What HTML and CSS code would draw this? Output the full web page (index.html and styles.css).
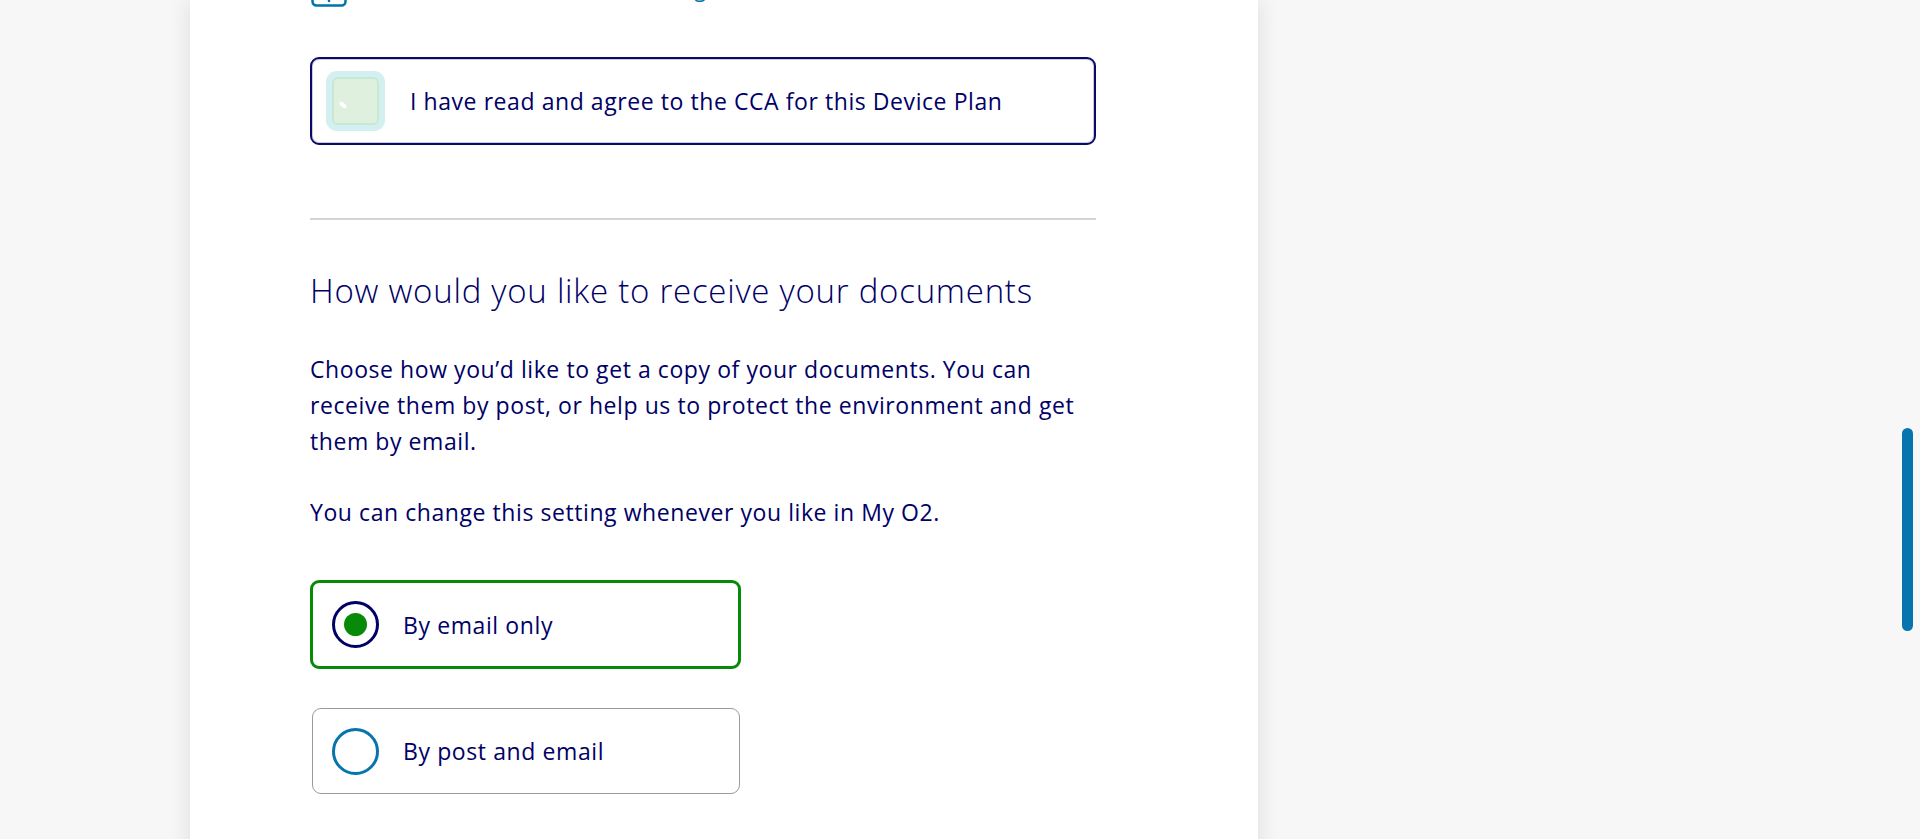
FILE: index.html
```html
<!DOCTYPE html>
<html lang="en">
<head>
<meta charset="utf-8">
<title>Device Plan – Documents</title>
<link rel="stylesheet" href="styles.css">
</head>
<body>
<div class="page">
  <main class="card">
    <div class="content">
      <div class="doc-link">
        <svg class="doc-icon" width="36" height="36" viewBox="0 0 36 36" aria-hidden="true">
          <rect x="1.5" y="1.5" width="33" height="33" rx="4" fill="none" stroke="#0073ae" stroke-width="2.5"/>
          <path d="M18 24 L18 30" stroke="#0073ae" stroke-width="2.5" stroke-linecap="round"/>
        </svg>
        <span class="doc-text">Download the Consumer Credit Agreement</span>
      </div>

      <label class="agree-box">
        <span class="checkbox"><span class="checkbox-inner"><span class="tick"></span></span></span>
        <span class="agree-text">I have read and agree to the CCA for this Device Plan</span>
      </label>

      <hr class="divider">

      <h2 class="heading">How would you like to receive your documents</h2>

      <p class="para">Choose how you’d like to get a copy of your documents. You can receive them by post, or help us to protect the environment and get them by email.</p>
      <p class="para para-gap">You can change this setting whenever you like in My O2.</p>

      <div class="options">
        <label class="option option-selected">
          <span class="radio radio-on"><span class="dot"></span></span>
          <span class="option-text">By email only</span>
        </label>
        <label class="option option-plain">
          <span class="radio radio-off"></span>
          <span class="option-text">By post and email</span>
        </label>
      </div>
    </div>
  </main>
</div>
<div class="scroll-thumb"></div>
</body>
</html>
```

FILE: styles.css
```css
html, body {
  margin: 0;
  padding: 0;
}
body {
  background: #f7f7f7;
  font-family: "Open Sans", "Noto Sans", sans-serif;
  color: #000066;
  height: 839px;
  overflow: hidden;
}
.page {
  display: flex;
  padding-left: 190px;
}
.card {
  width: 1068px;
  min-height: 900px;
  background: #ffffff;
  box-shadow: 0 0 22px rgba(0, 0, 0, 0.11);
  box-sizing: border-box;
  padding: 0 162px 0 120px;
}
.content {
  width: 786px;
}
.doc-link {
  display: flex;
  align-items: flex-end;
  gap: 12px;
  height: 37px;
  margin-top: -30px;
  color: #0073ae;
  font-size: 21.5px;
  line-height: 28px;
}
.doc-icon {
  flex: none;
  margin-left: 1px;
}
.doc-text {
  margin-bottom: 4px;
}
.agree-box {
  display: flex;
  align-items: center;
  box-sizing: border-box;
  height: 88px;
  margin-top: 50px;
  padding-left: 14px;
  border: 2px solid #0a0a6a;
  border-radius: 9px;
  box-shadow: inset 0 0 0 1px rgba(110, 110, 140, 0.35);
}
.checkbox {
  flex: none;
  width: 59px;
  height: 60px;
  border-radius: 11px;
  background: #d3eff0;
  display: flex;
  align-items: center;
  justify-content: center;
  margin-right: 25px;
}
.checkbox-inner {
  position: relative;
  width: 43px;
  height: 44px;
  border: 2px solid #c9e8d4;
  border-radius: 6px;
  background: #dff0de;
}
.tick {
  position: absolute;
  left: 5px;
  top: 24px;
  width: 8px;
  height: 4px;
  border-radius: 2px;
  background: #ffffff;
  transform: rotate(40deg);
}
.agree-text {
  font-size: 23px;
  line-height: 30px;
  letter-spacing: 0.57px;
}
.divider {
  margin: 73px 0 0;
  border: 0;
  height: 2px;
  background: #d4d4d4;
}
.heading {
  margin: 51px 0 0;
  font-size: 33px;
  font-weight: 300;
  line-height: 40px;
  letter-spacing: 0.75px;
}
.para {
  margin: 40px 0 0;
  font-size: 23px;
  line-height: 36px;
  letter-spacing: 0.57px;
}
.para.para-gap {
  margin-top: 35px;
}
.options {
  display: flex;
  flex-direction: column;
  align-items: flex-start;
  margin-top: 50px;
}
.option {
  display: flex;
  align-items: center;
  box-sizing: border-box;
  border-radius: 9px;
}
.option-selected {
  width: 431px;
  height: 89px;
  border: 3px solid #078a08;
  padding-left: 19px;
}
.option-plain {
  width: 428px;
  height: 86px;
  margin: 39px 0 0 2px;
  border: 1px solid #9a9a9a;
  padding-left: 19px;
}
.radio {
  flex: none;
  box-sizing: border-box;
  width: 47px;
  height: 47px;
  border-radius: 50%;
  display: flex;
  align-items: center;
  justify-content: center;
  margin-right: 24px;
}
.radio-on {
  border: 3px solid #000066;
}
.radio-off {
  border: 3px solid #0874ae;
}
.dot {
  width: 23px;
  height: 23px;
  border-radius: 50%;
  background: #078a08;
}
.option-text {
  font-size: 23px;
  line-height: 30px;
  letter-spacing: 0.6px;
}
.scroll-thumb {
  position: fixed;
  top: 428px;
  right: 7px;
  width: 11px;
  height: 203px;
  border-radius: 6px;
  background: #0874ad;
}
```
